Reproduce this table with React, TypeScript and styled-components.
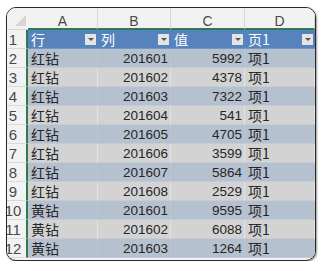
import styled, { createGlobalStyle } from "styled-components";

const GlobalStyle = createGlobalStyle`
  html, body {
    margin: 0;
    background: #ffffff;
  }
`;

const Page = styled.div`
  padding: 7px 0 0 6px;
`;

const Frame = styled.div`
  width: 308px;
  height: 252px;
  border: 1px solid #2a2a2a;
  border-radius: 10px;
  overflow: hidden;
  box-shadow: 1px 1px 2px rgba(0, 0, 0, 0.4);
  background: #f2f2f2;
`;

const Sheet = styled.div`
  display: grid;
  grid-template-columns: 21px 70px 73px 74px 70px;
  grid-template-rows: 22px;
  grid-auto-rows: 19px;
  font-family: "Noto Sans CJK SC", "Liberation Sans", sans-serif;
`;

const Corner = styled.div`
  position: relative;
  background: #f2f2f2;
  border-bottom: 1px solid #d4d4d4;
  &::after {
    content: "";
    position: absolute;
    right: 2px;
    bottom: 3px;
    border-style: solid;
    border-width: 0 0 11px 11px;
    border-color: transparent transparent #d6d6d6 transparent;
  }
`;

const ColHead = styled.div`
  display: flex;
  align-items: center;
  justify-content: center;
  padding-top: 5px;
  background: #f2f2f2;
  border-right: 1px solid #d8d8d8;
  border-bottom: 2px solid #2f7a4f;
  color: #4a4a4a;
  font-family: "Liberation Sans", sans-serif;
  font-size: 14px;
`;

const RowHead = styled.div`
  display: flex;
  align-items: center;
  justify-content: center;
  padding-right: 7px;
  background: #f2f2f2;
  border-right: 2px solid #2f7a4f;
  border-bottom: 1px solid #dadada;
  color: #4a4a4a;
  font-family: "Liberation Sans", sans-serif;
  font-size: 15px;
`;

const HeadCell = styled.div`
  display: flex;
  align-items: center;
  justify-content: space-between;
  padding: 0 2px 0 3px;
  background: #5683bb;
  border-bottom: 1px solid #7397c3;
  color: #ffffff;
  font-size: 14px;
`;

const Drop = styled.span`
  width: 11px;
  height: 11px;
  display: flex;
  align-items: center;
  justify-content: center;
  background: #e4e4e4;
  &::after {
    content: "";
    border-style: solid;
    border-width: 3px 3px 0 3px;
    border-color: #555555 transparent transparent transparent;
  }
`;

const DataCell = styled.div<{ $band: boolean; $right?: boolean }>`
  display: flex;
  align-items: center;
  justify-content: ${(p) => (p.$right ? "flex-end" : "flex-start")};
  padding: 0 2px 0 3px;
  background: ${(p) => (p.$band ? "#b6c1cf" : "#d3d3d3")};
  border-right: 1px solid ${(p) => (p.$band ? "#bcc6d2" : "#e3e3e3")};
  border-bottom: 1px solid ${(p) => (p.$band ? "#c3cbd6" : "#c8ccd2")};
  color: #262626;
  font-family: ${(p) =>
    p.$right ? '"Liberation Sans", sans-serif' : '"Noto Sans CJK SC", sans-serif'};
  font-size: ${(p) => (p.$right ? "13.5px" : "14px")};
`;

const rows: [string, string, string][] = [
  ["红钻", "201601", "5992"],
  ["红钻", "201602", "4378"],
  ["红钻", "201603", "7322"],
  ["红钻", "201604", "541"],
  ["红钻", "201605", "4705"],
  ["红钻", "201606", "3599"],
  ["红钻", "201607", "5864"],
  ["红钻", "201608", "2529"],
  ["黄钻", "201601", "9595"],
  ["黄钻", "201602", "6088"],
  ["黄钻", "201603", "1264"],
];

const headers = ["行", "列", "值", "页1"];

export default function App() {
  return (
    <Page>
      <GlobalStyle />
      <Frame>
        <Sheet>
          <Corner />
          {["A", "B", "C", "D"].map((l) => (
            <ColHead key={l}>{l}</ColHead>
          ))}

          <RowHead>1</RowHead>
          {headers.map((h) => (
            <HeadCell key={h}>
              <span>{h}</span>
              <Drop />
            </HeadCell>
          ))}

          {rows.map((r, i) => {
            const band = i % 2 === 0;
            return [
              <RowHead key={"h" + i}>{i + 2}</RowHead>,
              <DataCell key={"a" + i} $band={band}>{r[0]}</DataCell>,
              <DataCell key={"b" + i} $band={band} $right>{r[1]}</DataCell>,
              <DataCell key={"c" + i} $band={band} $right>{r[2]}</DataCell>,
              <DataCell key={"d" + i} $band={band}>项1</DataCell>,
            ];
          })}
        </Sheet>
      </Frame>
    </Page>
  );
}
